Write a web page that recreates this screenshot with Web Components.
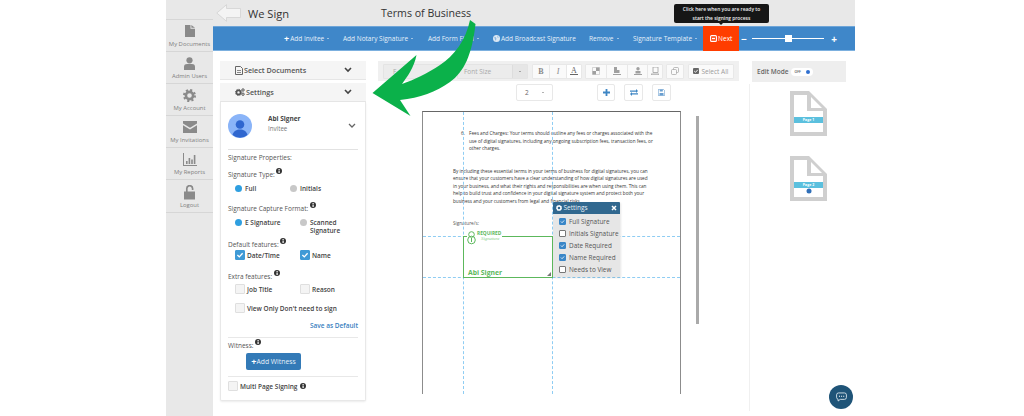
<!DOCTYPE html>
<html>
<head>
<meta charset="utf-8">
<title>We Sign</title>
<style>
  html, body { margin: 0; padding: 0; background: #fff; overflow: hidden; }
  body { font-family: "Open Sans", "Liberation Sans", sans-serif; color: #555; }
</style>
</head>
<body>
<sign-app></sign-app>
<script>
const infoIcon = `<svg class="info" width="6" height="6" viewBox="0 0 12 12"><circle cx="6" cy="6" r="6" fill="#333"/><rect x="5" y="5" width="2.4" height="5" fill="#fff"/><rect x="5" y="2" width="2.4" height="2" fill="#fff"/></svg>`;

class NavItem extends HTMLElement {
  constructor() {
    super();
    this.attachShadow({mode: 'open'}).innerHTML = `
      <style>
        :host { display: flex; flex-direction: column; align-items: center; justify-content: space-between;
          height: 32px; box-sizing: border-box; border-bottom: 1px solid #d6d6d6; padding: 5px 0 3px;
          font-size: 5.9px; color: #7f7f7f; white-space: nowrap; }
        ::slotted(svg) { display: block; }
      </style>
      <slot name="icon"></slot><span>${this.getAttribute('label')}</span>`;
  }
}
customElements.define('nav-item', NavItem);

class SideNav extends HTMLElement {
  constructor() {
    super();
    const c = '#8a8a8a';
    this.attachShadow({mode: 'open'}).innerHTML = `
      <style>
        :host { display: block; width: 47px; flex: none; background: #e8e8e8; padding-top: 20px; }
        .top { height: 0; border-top: 1px solid #d6d6d6; margin-top: -1px; }
      </style>
      <div class="top"></div>
      <nav-item label="My Documents"><svg slot="icon" width="10" height="12" viewBox="0 0 11 13"><path fill="${c}" d="M0 0h6v4h5v9H0zM7 0l4 3H7z"/></svg></nav-item>
      <nav-item label="Admin Users"><svg slot="icon" width="11" height="13" viewBox="0 0 11 13"><circle cx="5.5" cy="3.3" r="3.1" fill="${c}"/><path fill="${c}" d="M0 13V9.5C0 7.8 1.5 7 3 7h5c1.5 0 3 .8 3 2.5V13z"/></svg></nav-item>
      <nav-item label="My Account"><svg slot="icon" width="13" height="13" viewBox="0 0 13 13"><circle cx="6.5" cy="6.5" r="3.6" fill="none" stroke="${c}" stroke-width="2.6"/><circle cx="6.5" cy="6.5" r="5.4" fill="none" stroke="${c}" stroke-width="2.2" stroke-dasharray="2.1 2.14"/></svg></nav-item>
      <nav-item label="My Invitations"><svg slot="icon" width="14" height="12" viewBox="0 0 14 12"><path fill="${c}" d="M0 0h14v2.6L7 6.8 0 2.6zM0 4.2l7 4.2 7-4.2V12H0z"/></svg></nav-item>
      <nav-item label="My Reports"><svg slot="icon" width="14" height="13" viewBox="0 0 14 13"><path fill="${c}" d="M0 0h1v12h13v1H0zM3 8h1.6v3H3zM5.6 5h1.6v6H5.6zM8.2 6.500h1.6V11H8.200zM10.800 2h1.600v9h-1.600z"/></svg></nav-item>
      <nav-item label="Logout" style="height:33px"><svg slot="icon" width="11" height="15" viewBox="0 0 11 15"><path fill="none" stroke="${c}" stroke-width="1.7" d="M8.600 5V3.600a2.900 2.900 0 0 0-5.800 0V7"/><rect y="6.500" width="11" height="8" fill="${c}"/></svg></nav-item>`;
  }
}
customElements.define('side-nav', SideNav);

class TitleBar extends HTMLElement {
  constructor() {
    super();
    this.attachShadow({mode: 'open'}).innerHTML = `
      <style>
        :host { display: flex; align-items: center; height: 26px; background: #e8e8e8; padding-left: 3px; color: #333; white-space: nowrap; }
        svg { flex: none; }
        .app { margin-left: 7px; width: 133px; font-size: 11.1px; }
        .doc { font-size: 10.6px; }
      </style>
      <svg width="25" height="18" viewBox="0 0 25 18"><path d="M24.500 4.500H10.500V.7L.8 9l9.700 8.300v-3.800h14z" fill="#f4f4f4" stroke="#d2d2d2" stroke-width=".8"/></svg>
      <span class="app">We Sign</span><span class="doc">Terms of Business</span>`;
  }
}
customElements.define('title-bar', TitleBar);

class ActionBar extends HTMLElement {
  constructor() {
    super();
    const caret = `<i class="caret"></i>`;
    this.attachShadow({mode: 'open'}).innerHTML = `
      <style>
        :host { display: flex; align-items: center; height: 25px; box-sizing: border-box; background: #3f87c9; border-top: 1px solid #6ea5d8;
          border-bottom: 1px solid #7cb0df; padding-left: 71px; font-size: 6.5px; color: #e6f0f9; white-space: nowrap; }
        span { display: inline-flex; align-items: center; gap: 1px; }
        .plus { font-size: 9px; font-weight: 700; line-height: 1; color: #fff; }
        .caret { width: 0; height: 0; border: 1.6px solid transparent; border-top-color: #fff; border-bottom: 0; margin-left: 2px; }
        .next { align-self: stretch; margin: -1px 0; width: 36px; justify-content: center; background: #ff3d00; color: #fff; gap: 1.5px; }
        .slider { display: flex; align-items: center; margin-left: 2px; }
        .bar { width: 72px; height: 1px; background: #fff; margin: 0 7px 0 5px; display: flex; justify-content: center; align-items: center; }
        .bar b { width: 7px; height: 7px; background: #fff; flex: none; }
        .pm { color: #fff; font-size: 10px; font-weight: 700; line-height: 1; width: 6px; justify-content: center; }
      </style>
      <span style="width:59px"><b class="plus">+</b>Add Invitee${caret}</span>
      <span style="width:85px">Add Notary Signature ${caret}</span>
      <span style="width:65px">Add Form Field ${caret}</span>
      <span style="width:96px"><svg width="7" height="7" viewBox="0 0 12 12"><circle cx="6" cy="6" r="6" fill="#dbe8f4"/><path d="M2 3l3 1 1 3-2 3zM7 1l3 3-2 1z" fill="#8fb8de"/></svg>Add Broadcast Signature</span>
      <span style="width:44px">Remove ${caret}</span>
      <span style="width:70px">Signature Template ${caret}</span>
      <span class="next"><svg width="7" height="7" viewBox="0 0 7 7"><rect x=".6" y=".6" width="5.8" height="5.8" rx="1" fill="none" stroke="#fff" stroke-width="1.1"/><rect x="2" y="2.800" width="3" height="1.400" fill="#fff"/></svg>Next</span>
      <div class="slider"><span class="pm">−</span><div class="bar"><b></b></div><span class="pm">+</span></div>`;
  }
}
customElements.define('action-bar', ActionBar);

class PanelHead extends HTMLElement {
  constructor() {
    super();
    this.attachShadow({mode: 'open'}).innerHTML = `
      <style>
        :host { display: flex; align-items: center; height: 19px; background: #f5f5f5; border-bottom: 1px solid #e6e6e6; box-sizing: border-box;
          padding: 0 14px 0 15px; font-size: 7.2px; font-weight: 600; color: #555; }
        span { flex: 1; display: flex; align-items: center; gap: 1px; }
      </style>
      <span><slot></slot></span>
      <svg width="8" height="6" viewBox="0 0 8 6"><path d="M1 1l3 3 3-3" fill="none" stroke="#444" stroke-width="1.6"/></svg>`;
  }
}
customElements.define('panel-head', PanelHead);

class PropLabel extends HTMLElement {
  constructor() {
    super();
    this.attachShadow({mode: 'open'}).innerHTML = `
      <style>
        :host { display: flex; align-items: flex-start; gap: 1.5px; font-size: 6.5px; color: #555; font-weight: 500; height: 9px; line-height: 9px; white-space: nowrap; }
        svg { margin-top: -2px; }
      </style>
      <slot></slot>${this.hasAttribute('info') ? infoIcon : ''}`;
  }
}
customElements.define('prop-label', PropLabel);

class RadioOpt extends HTMLElement {
  constructor() {
    super();
    const on = this.hasAttribute('checked');
    this.attachShadow({mode: 'open'}).innerHTML = `
      <style>
        :host { display: flex; gap: 3px; font-size: 6.5px; font-weight: 600; color: #444; line-height: 8px; }
        i { width: 7px; height: 7px; border-radius: 50%; background: ${on ? '#2f9fe0' : '#c8c8c8'}; flex: none; }
      </style>
      <i></i><div><slot></slot></div>`;
  }
}
customElements.define('radio-opt', RadioOpt);

class CheckOpt extends HTMLElement {
  constructor() {
    super();
    const on = this.hasAttribute('checked');
    this.attachShadow({mode: 'open'}).innerHTML = `
      <style>
        :host { display: flex; align-items: center; gap: 2px; font-size: 6.5px; font-weight: 600; color: #444; white-space: nowrap; }
        i { width: 10px; height: 10px; border-radius: 1px; box-sizing: border-box; flex: none; display: flex;
            background: ${on ? '#3f9ad6' : '#f4f4f4'}; border: 1px solid ${on ? '#3f9ad6' : '#dfdfdf'}; }
      </style>
      <i>${on ? '<svg width="8" height="8" viewBox="0 0 8 8"><path d="M1.400 4l1.900 1.900 3.300-3.600" fill="none" stroke="#fff" stroke-width="1.300"/></svg>' : ''}</i><span><slot></slot></span>`;
  }
}
customElements.define('check-opt', CheckOpt);

class LeftPanel extends HTMLElement {
  constructor() {
    super();
    this.attachShadow({mode: 'open'}).innerHTML = `
      <style>
        :host { display: block; width: 146px; flex: none; margin-top: 10px; }
        panel-head svg { display: block; }
        .card { background: #fff; border: 1px solid #e8e8e8; border-top: 0; border-radius: 0 0 2px 2px; height: 299px; box-sizing: border-box; padding: 0 7px; box-shadow: 0 1px 2px rgba(0,0,0,.08); }
        .user { display: flex; align-items: center; height: 47px; border-bottom: 1px solid #e2e2e2; }
        .who { margin-left: 16px; flex: 1; font-size: 6.5px; line-height: 10px; color: #444; font-weight: 700; margin-top: -4px; }
        .who small { display: block; font-size: 6.2px; font-weight: 400; color: #777; }
        .row { display: flex; }
        .save { text-align: right; font-size: 6.5px; font-weight: 600; color: #3a7fc0; margin-top: 8px; height: 10px; line-height: 10px; padding-bottom: 6px; border-bottom: 1px solid #e8e8e8; }
        .btn { display: flex; width: 55px; height: 17px; margin: 3px 0 6px 18px; align-items: center; justify-content: center; background: #337ab7; border-radius: 2px; color: #e6f0f9; font-size: 6.8px; }
        .btn b { font-size: 9px; line-height: 1; color: #fff; }
        hr { border: 0; border-top: 1px solid #e8e8e8; margin: 0; }
      </style>
      <panel-head><svg width="8" height="9" viewBox="0 0 8 9"><path d="M.5.5h5l2 2v6h-7z" fill="none" stroke="#666"/><path d="M2 4h4v.8H2zM2 6h4v.8H2z" fill="#666"/></svg> Select Documents</panel-head>
      <div style="height:3px"></div>
      <panel-head><svg width="10" height="8" viewBox="0 0 10 8"><circle cx="3.500" cy="4.400" r="2" fill="none" stroke="#555" stroke-width="1.600"/><circle cx="3.500" cy="4.400" r="3.100" fill="none" stroke="#555" stroke-width="1" stroke-dasharray="1.200 1.200"/><circle cx="8" cy="2" r="1.200" fill="none" stroke="#555"/><circle cx="8" cy="6.200" r="1.200" fill="none" stroke="#555"/></svg> Settings</panel-head>
      <div class="card">
        <div class="user">
          <svg width="24" height="24" viewBox="0 0 24 24"><circle cx="12" cy="12" r="12" fill="#8ab4f8"/><circle cx="12" cy="10.500" r="4.300" fill="#2f66cf"/><path d="M4.500 21c1-4 4-5.500 7.500-5.500s6.500 1.500 7.500 5.500a12 12 0 0 1-15 0z" fill="#2f66cf"/></svg>
          <div class="who">Abi Signer<small>Invitee</small></div>
          <svg style="margin:0 2px 0 0" width="8" height="6" viewBox="0 0 8 6"><path d="M1 1l3 3 3-3" fill="none" stroke="#666" stroke-width="1.300"/></svg>
        </div>
        <prop-label style="margin-top:3px">Signature Properties:</prop-label>
        <prop-label info style="margin-top:8px">Signature Type:</prop-label>
        <div class="row" style="margin:6px 0 0 7px"><radio-opt checked style="width:55px">Full</radio-opt><radio-opt>Initials</radio-opt></div>
        <prop-label info style="margin-top:11px">Signature Capture Format:</prop-label>
        <div class="row" style="margin:6px 0 0 7px;height:16px"><radio-opt checked style="width:65px">E Signature</radio-opt><radio-opt>Scanned<br>Signature</radio-opt></div>
        <prop-label info style="margin-top:5px">Default features:</prop-label>
        <div class="row" style="margin:1px 0 0 7px"><check-opt checked style="width:65px">Date/Time</check-opt><check-opt checked>Name</check-opt></div>
        <prop-label info style="margin-top:12px">Extra features:</prop-label>
        <div class="row" style="margin:3px 0 0 7px"><check-opt style="width:65px">Job Title</check-opt><check-opt>Reason</check-opt></div>
        <div class="row" style="margin:9px 0 0 7px"><check-opt>View Only Don't need to sign</check-opt></div>
        <div class="save">Save as Default</div>
        <prop-label info style="margin-top:3px">Witness:</prop-label>
        <div class="btn"><b>+</b>Add Witness</div>
        <hr>
        <check-opt style="margin-top:4px">Multi Page Signing ${infoIcon.replace('<svg class="info"', '<svg style="margin:-4px 0 0 1px"')}</check-opt>
      </div>`;
  }
}
customElements.define('left-panel', LeftPanel);

class DocToolbar extends HTMLElement {
  constructor() {
    super();
    const g = '#a0a0a0';
    this.attachShadow({mode: 'open'}).innerHTML = `
      <style>
        :host { display: block; font-size: 6.5px; color: #a9a9a9; white-space: nowrap; }
        .top { display: flex; align-items: center; height: 20px; background: #f0f0f0; padding-left: 5px; }
        .sel { display: flex; align-items: center; height: 15px; background: #ececec; border: 1px solid #e4e4e4; box-sizing: border-box; border-radius: 1px; }
        .grp { display: flex; height: 15px; background: #fafafa; border: 1px solid #e8e8e8; box-sizing: border-box; border-radius: 1px; }
        .grp > * { display: flex; align-items: center; justify-content: center; border-right: 1px solid #e8e8e8; }
        .grp > *:last-child { border-right: 0; }
        .caret { width: 0; height: 0; border: 1.600px solid transparent; border-top-color: #666; border-bottom: 0; }
        .second { display: flex; height: 17px; margin-top: 3px; align-items: stretch; }
        .cell { display: flex; align-items: center; justify-content: center; background: #fff; border: 1px solid #e8e8e8; border-radius: 2px; box-sizing: border-box; }
        .serif { font-family: "Liberation Serif", serif; font-size: 8px; font-weight: 700; color: #888; }
      </style>
      <div class="top">
        <div class="sel" style="width:70px;padding-left:9px">F</div>
        <div class="sel" style="width:71px;margin-left:4px;padding-left:6px"><span style="flex:1">Font Size</span><span style="width:14px;height:100%;border-left:1px solid #ddd;background:#e6e6e6;display:flex;align-items:center;justify-content:center"><i class="caret"></i></span></div>
        <div class="grp" style="margin-left:4px;width:50px">
          <span class="serif" style="width:16px">B</span><span class="serif" style="width:16px;font-style:italic;font-weight:400">I</span><span class="serif" style="flex:1;background:#fff;flex-direction:column;line-height:7px;font-weight:400;color:#666">A<i style="width:8px;height:1px;background:#666;display:block"></i></span>
        </div>
        <div class="grp" style="margin-left:3px;width:78px">
          <span style="width:20px"><svg width="8" height="8" viewBox="0 0 8 8"><path d="M.5.5h7v7h-7z" fill="none" stroke="#c4c4c4" stroke-width=".7"/><path d="M.5 4h3.500v3.500H.5zM4 .5h3.500V4H4z" fill="${g}"/></svg></span>
          <span style="width:20px"><svg width="8" height="8" viewBox="0 0 8 8"><path d="M1 0h3v3h2.500v3H1zM0 7h8v1H0z" fill="${g}"/></svg></span>
          <span style="width:19px"><svg width="8" height="8" viewBox="0 0 8 8"><circle cx="4" cy="1.800" r="1.700" fill="${g}"/><path d="M1.500 4h5v2.400h-5zM0 7h8v1H0z" fill="${g}"/></svg></span>
          <span style="flex:1"><svg width="8" height="8" viewBox="0 0 8 8"><path d="M2 0h5v5.500H2zM0 7h8v1H0z" fill="none" stroke="${g}" stroke-width=".8"/></svg></span>
        </div>
        <div class="grp" style="margin-left:3px;width:18px"><span style="flex:1"><svg width="8" height="8" viewBox="0 0 8 8"><rect x="2.500" y=".5" width="5" height="5" rx="1" fill="none" stroke="${g}" stroke-width=".7"/><rect x=".5" y="2.500" width="5" height="5" rx="1" fill="#fafafa" stroke="${g}" stroke-width=".7"/></svg></span></div>
        <div class="grp" style="margin-left:4px;width:46px"><span style="flex:1;gap:2px;color:#9a9a9a"><svg width="6" height="6" viewBox="0 0 6 6"><rect width="6" height="6" rx="1" fill="#666"/><path d="M1.200 3l1.300 1.300 2.300-2.500" fill="none" stroke="#fff" stroke-width=".9"/></svg>Select All</span></div>
      </div>
      <div class="second">
        <div class="cell" style="width:37px;margin-left:138px;color:#666;justify-content:flex-start;padding-left:8px;gap:13px">2 <i class="caret"></i></div>
        <div class="cell" style="width:18px;margin-left:44px"><svg width="7" height="7" viewBox="0 0 7 7"><path d="M2.600 0h1.800v2.600H7v1.800H4.400V7H2.600V4.400H0V2.600h2.600z" fill="#3f86c4"/></svg></div>
        <div class="cell" style="width:19px;margin-left:9px"><svg width="8" height="7" viewBox="0 0 8 7"><path d="M0 1.400h6V0l2 2-2 2V2.800H0zM8 4.200H2V3L0 5l2 2V5.600h6z" fill="#3f86c4"/></svg></div>
        <div class="cell" style="width:19px;margin-left:9px"><svg width="7" height="7" viewBox="0 0 7 7"><path d="M.3.3h5L6.700 1.700v5H.3z" fill="none" stroke="#6a9fd0" stroke-width=".7"/><path d="M1.800.5h3v2h-3zM1.500 4h4v2.500h-4z" fill="#6a9fd0"/></svg></div>
      </div>`;
  }
}
customElements.define('doc-toolbar', DocToolbar);

class SettingsPop extends HTMLElement {
  constructor() {
    super();
    const row = (on, t) => `<check-opt class="opt" ${on ? 'checked' : ''}>${t}</check-opt>`;
    this.attachShadow({mode: 'open'}).innerHTML = `
      <style>
        :host { position: absolute; left: 130px; top: 90px; width: 67px; height: 75px; background: #e6e6e6; box-sizing: border-box; box-shadow: 1px 1px 2px rgba(0,0,0,.1); font-size: 6.500px; }
        .hd { display: flex; align-items: center; gap: 1.500px; height: 12px; background: #31688f; color: #e8f0f6; padding: 0 3px; border-radius: 1px 1px 0 0; }
        .hd span { flex: 1; }
        .list { display: flex; flex-direction: column; padding: 4px 0 0 6px; gap: 5px; }
        check-opt { font-weight: 400; color: #555; font-size: 6.400px; height: 7px; gap: 3px; }
      </style>
      <div class="hd"><svg width="6" height="6" viewBox="0 0 6 6"><circle cx="3" cy="3" r="2" fill="none" stroke="#fff" stroke-width="1.400"/><circle cx="3" cy="3" r="2.700" fill="none" stroke="#fff" stroke-width=".8" stroke-dasharray=".9 .9"/></svg><span>Settings</span><svg width="6" height="6" viewBox="0 0 6 6"><path d="M1 1l4 4M5 1L1 5" stroke="#fff" stroke-width="1.500"/></svg></div>
      <div class="list">
        ${row(1,'Full Signature')}${row(0,'Initials Signature')}${row(1,'Date Required')}${row(1,'Name Required')}${row(0,'Needs to View')}
      </div>`;
    this.shadowRoot.querySelectorAll('check-opt').forEach(o => {
      const box = o.shadowRoot.querySelector('i');
      box.style.cssText = 'width:7px;height:7px;' + (o.hasAttribute('checked') ? 'background:#3a87c8;border-color:#3a87c8;' : 'background:#fff;border-color:#777;');
      const svg = box.querySelector('svg');
      if (svg) { svg.setAttribute('width', '5'); svg.setAttribute('height', '5'); }
    });
  }
}
customElements.define('settings-pop', SettingsPop);

class DocPage extends HTMLElement {
  constructor() {
    super();
    this.attachShadow({mode: 'open'}).innerHTML = `
      <style>
        :host { display: block; position: relative; width: 259px; height: 283px; box-sizing: border-box; background: #fff; border: 1px solid #8c8c8c; border-top-color: #666; border-bottom: 0; font-size: 4.680px; line-height: 7.500px; color: #333; overflow: hidden; }
        .item { display: flex; margin: 18px 0 0 38px; width: 192px; }
        .item b { font-weight: 400; width: 8px; flex: none; }
        p { margin: 15px 0 0 30px; width: 199px; }
        .sig { margin: 15px 0 0 30px; color: #555; }
        .gv, .gh { position: absolute; border: 0 dashed #8fcdf3; }
        .gv { top: 0; bottom: 0; border-left-width: 1px; }
        .gh { left: 0; right: 0; border-top-width: 1px; }
        .box { position: absolute; left: 40px; top: 124px; width: 90px; height: 42px; box-sizing: border-box; border: 1px solid #5cb85c; }
        .logo { position: absolute; left: 3px; top: -6px; background: #fff; display: flex; gap: 1px; color: #5cb85c; font-size: 4.800px; line-height: 5px; font-weight: 700; padding: 0 1px 1px 0; }
        .logo em { display: block; font-family: "Liberation Serif", serif; padding-left: 4px; font-weight: 400; color: #8ccf8c; }
        .name { position: absolute; left: 4px; bottom: 1px; font-size: 6.800px; font-weight: 700; color: #5cb85c; }
        .grip { position: absolute; right: 1px; bottom: 1px; }
      </style>
      <div class="item"><b>6.</b><span>Fees and Charges: Your terms should outline any fees or charges associated with the use of digital signatures, including any ongoing subscription fees, transaction fees, or other charges.</span></div>
      <p>By including these essential terms in your terms of business for digital signatures, you can ensure that your customers have a clear understanding of how digital signatures are used in your business, and what their rights and responsibilities are when using them. This can help to build trust and confidence in your digital signature system and protect both your business and your customers from legal and financial risks.</p>
      <div class="sig">Signature/s:</div>
      <div class="gv" style="left:40px"></div><div class="gv" style="left:129px"></div>
      <div class="gh" style="top:124px"></div><div class="gh" style="top:165px"></div>
      <div class="box">
        <div class="logo"><svg width="9" height="14" viewBox="0 0 9 14"><circle cx="4.500" cy="3.500" r="2.800" fill="none" stroke="#5cb85c"/><circle cx="4.500" cy="9" r="3.800" fill="none" stroke="#5cb85c"/><path d="M4 7h1v4H4z" fill="#5cb85c"/></svg><div>REQUIRED<em>Signature</em></div></div>
        <div class="name">Abi Signer</div>
        <svg class="grip" width="4" height="4" viewBox="0 0 4 4"><path d="M0 4l4-4v4z" fill="#777"/></svg>
      </div>
      <settings-pop></settings-pop>`;
  }
}
customElements.define('doc-page', DocPage);

class PageThumb extends HTMLElement {
  constructor() {
    super();
    const mark = this.hasAttribute('mark') ? '<circle cx="19" cy="35" r="2.500" fill="#2f6fb8"/>' : '';
    this.attachShadow({mode: 'open'}).innerHTML = `
      <style>
        :host { display: block; width: 37px; height: 45px; position: relative; font-size: 3.500px; font-weight: 700; color: #fff; }
        svg { display: block; }
        span { position: absolute; left: 4px; top: 26px; width: 29px; height: 6px; line-height: 6px; background: #5bc0de; text-align: center; }
      </style>
      <svg width="37" height="45" viewBox="0 0 37 45"><path d="M0 0h19l18 18v27H0z" fill="#cfcfcf"/><path d="M4 4h13v16h16v21H4z" fill="#fff"/><path d="M21 6l11 11H21z" fill="#fff"/>${mark}</svg>
      <span>${this.getAttribute('label')}</span>`;
  }
}
customElements.define('page-thumb', PageThumb);

class RightPanel extends HTMLElement {
  constructor() {
    super();
    this.attachShadow({mode: 'open'}).innerHTML = `
      <style>
        :host { display: block; width: 94px; flex: none; margin: 10px 0 0 13px; position: relative; }
        .line { position: absolute; left: -3px; top: 23px; height: 327px; width: 1px; background: #f0f0f0; }
        .mode { display: flex; align-items: center; height: 21px; background: #eeeeee; padding-left: 5px; font-size: 6.500px; font-weight: 600; color: #666; }
        .tog { display: flex; align-items: center; justify-content: space-between; width: 22px; height: 8px; border-radius: 4px; background: #fff; margin-left: 2px; padding: 0 3px 0 4px; box-sizing: border-box; font-size: 3.500px; color: #555; }
        .tog i { width: 4px; height: 4px; border-radius: 50%; background: #2f6fd0; }
        .thumbs { display: flex; flex-direction: column; gap: 20px; margin: 9px 0 0 38px; }
      </style>
      <div class="line"></div>
      <div class="mode">Edit Mode<span class="tog">OFF<i></i></span></div>
      <div class="thumbs"><page-thumb label="Page 1"></page-thumb><page-thumb label="Page 2" mark></page-thumb></div>`;
  }
}
customElements.define('right-panel', RightPanel);

class SignApp extends HTMLElement {
  constructor() {
    super();
    this.attachShadow({mode: 'open'}).innerHTML = `
      <style>
        :host { display: flex; position: relative; width: 689px; height: 416px; margin-left: 166px; overflow: hidden; background: #fff; font-family: "Open Sans", "Liberation Sans", sans-serif; }
        .main { flex: 1; min-width: 0; }
        .body { display: flex; padding-left: 7px; }
        .center { width: 361px; flex: none; margin: 10px 0 0 12px; }
        .docrow { display: flex; margin: 10px 0 0 44px; }
        .scroll { width: 3px; height: 208px; margin: 5px 0 0 15px; background: #aaaaaa; }
        .tip { position: absolute; left: 508px; top: 4px; width: 95px; height: 19px; box-sizing: border-box; background: #161616; border-radius: 2px; color: #f0f0f0; font-size: 4.900px; font-weight: 600; line-height: 8.500px; text-align: center; padding-top: 1px; }
        .tip::after { content: ""; position: absolute; left: 45px; bottom: -2px; border: 2px solid transparent; border-top-color: #161616; border-bottom: 0; }
        .arrow { position: absolute; left: 0; top: 0; pointer-events: none; }
        .chat { position: absolute; left: 663px; top: 385px; width: 24px; height: 24px; border-radius: 50%; background: #1f5478; display: flex; align-items: center; justify-content: center; }
      </style>
      <side-nav></side-nav>
      <div class="main">
        <title-bar></title-bar>
        <action-bar></action-bar>
        <div class="body">
          <left-panel></left-panel>
          <div class="center">
            <doc-toolbar></doc-toolbar>
            <div class="docrow"><doc-page></doc-page><div class="scroll"></div></div>
          </div>
          <right-panel></right-panel>
        </div>
      </div>
      <div class="tip">Click here when you are ready to<br>start the signing process</div>
      <svg class="arrow" width="689" height="416" viewBox="166 0 689 416"><path fill="#0bb14a" d="M470 20C466 40 454 56 440 65 428 73 414 80 402 84 407 77 414 68 416.500 55L372.500 93 410.500 116 400 100C420 98 436 92 450 82 464 72 472 55 475.500 24z"/></svg>
      <div class="chat"><svg width="11" height="10" viewBox="0 0 13 11"><path d="M3 .7h7a2.300 2.300 0 0 1 2.300 2.300v3a2.300 2.300 0 0 1-2.300 2.300H5L2.500 10.300V8.200A2.300 2.300 0 0 1 .7 6V3A2.300 2.300 0 0 1 3 .7z" fill="none" stroke="#e6eef4"/><path d="M3.500 4h1.200v1.200H3.500zM6 4h1.200v1.200H6zM8.500 4h1.200v1.200H8.500z" fill="#fff"/></svg></div>`;
  }
}
customElements.define('sign-app', SignApp);
</script>
</body>
</html>
